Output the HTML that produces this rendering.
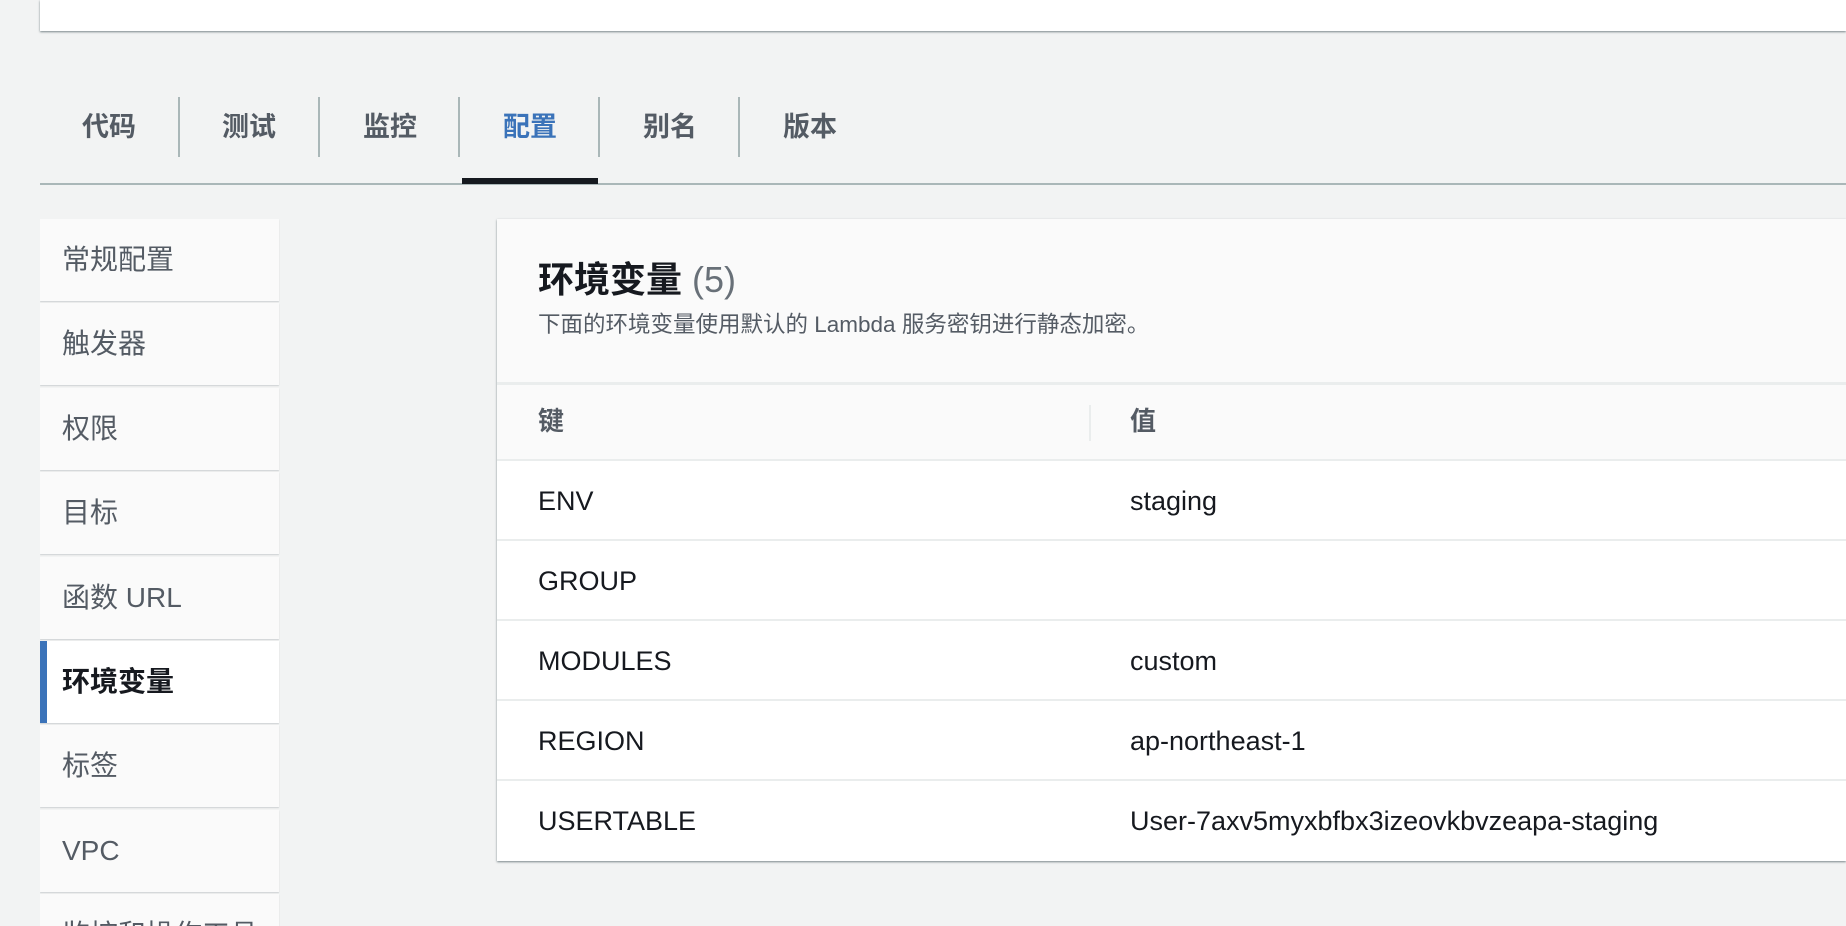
<!DOCTYPE html>
<html><head><meta charset="utf-8"><style>
*{margin:0;padding:0;box-sizing:border-box}
html,body{width:1846px;height:926px;overflow:hidden}
body{background:#f2f3f3;font-family:"Liberation Sans","Noto Sans CJK SC",sans-serif;position:relative;color:#16191f}
.wrap{position:absolute;left:0;top:0;width:1846px;height:926px;overflow:hidden}
.top{position:absolute;left:40px;top:0;right:0;height:31px;background:#fff;box-shadow:0 1px 2px rgba(0,28,36,.5)}
.tab{position:absolute;top:108px;font-size:27px;color:#545b64;font-weight:bold;line-height:38px}
.sep{position:absolute;top:97px;width:2px;height:60px;background:#aab7b8}
.tabline{position:absolute;left:40px;right:0;top:183px;height:2px;background:#aab7b8}
.active{position:absolute;left:462px;top:178px;width:136px;height:6px;background:#16191f}
.side{position:absolute;left:40px;top:219px;width:242px;height:707px;overflow:hidden}
.item{width:239px;height:82px;margin-bottom:2.4px;background:#fafafa;box-shadow:0 1px 1px rgba(0,28,36,.15);font-size:28px;color:#545b64;padding-left:22px;line-height:82px}
.item.on{background:#fff;color:#16191f;font-weight:bold;border-left:7px solid #3b73b9;padding-left:15px}
.card{position:absolute;left:497px;top:219px;right:0;height:642px;background:#fff;box-shadow:0 1px 2px rgba(0,28,36,.5)}
.hd{height:166px;background:#fafafa;border-bottom:3px solid #eaeded;padding:38px 0 0 41px}
.hd h2{font-size:36px;line-height:46px;font-weight:bold}
.hd h2 span{color:#687078;font-weight:normal}
.hd p{font-size:22.5px;color:#545b64;margin-top:4px}
.th{height:76px;background:#fafafa;border-bottom:2px solid #eaeded;position:relative;font-size:26px;font-weight:bold;color:#545b64}
.th div{position:absolute;top:16px}
.row{height:80px;border-bottom:2px solid #eaeded;position:relative;font-size:27px}
.row:last-child{border-bottom:none}
.row div{position:absolute;top:0;line-height:80px}
</style></head><body><div class="wrap">
<div class="top"></div>
<div class="tab" style="left:82px">代码</div>
<div class="sep" style="left:178px"></div>
<div class="tab" style="left:222px">测试</div>
<div class="sep" style="left:318px"></div>
<div class="tab" style="left:363px">监控</div>
<div class="sep" style="left:458px"></div>
<div class="tab" style="left:503px;color:#3b73b9">配置</div>
<div class="sep" style="left:598px"></div>
<div class="tab" style="left:643px">别名</div>
<div class="sep" style="left:738px"></div>
<div class="tab" style="left:783px">版本</div>
<div class="tabline"></div>
<div class="active"></div>
<div class="side">
<div class="item">常规配置</div>
<div class="item">触发器</div>
<div class="item">权限</div>
<div class="item">目标</div>
<div class="item">函数 URL</div>
<div class="item on">环境变量</div>
<div class="item">标签</div>
<div class="item">VPC</div>
<div class="item">监控和操作工具</div>
</div>
<div class="card">
<div class="hd"><h2>环境变量 <span>(5)</span></h2><p>下面的环境变量使用默认的 Lambda 服务密钥进行静态加密。</p></div>
<div class="th"><div style="left:41px">键</div><div style="left:592px;top:20px;width:2px;height:36px;background:#eaeded"></div><div style="left:633px">值</div></div>
<div class="row"><div style="left:41px">ENV</div><div style="left:633px">staging</div></div>
<div class="row"><div style="left:41px">GROUP</div></div>
<div class="row"><div style="left:41px">MODULES</div><div style="left:633px">custom</div></div>
<div class="row"><div style="left:41px">REGION</div><div style="left:633px">ap-northeast-1</div></div>
<div class="row"><div style="left:41px">USERTABLE</div><div style="left:633px">User-7axv5myxbfbx3izeovkbvzeapa-staging</div></div>
</div>
</div></body></html>
